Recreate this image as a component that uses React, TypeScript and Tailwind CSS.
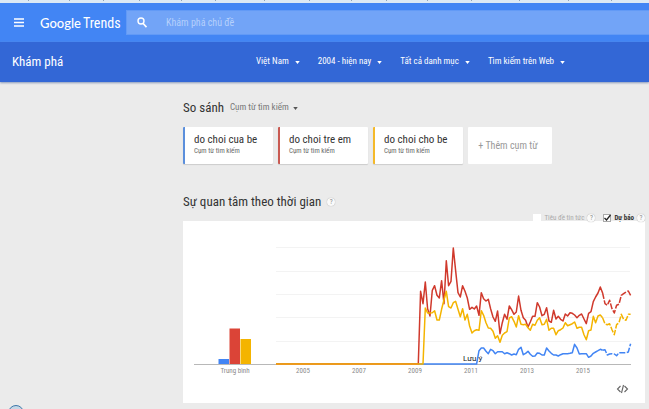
const BLUE = "#4285f4";
const RED = "#db4437";
const YELLOW = "#f4b400";

// monthly interest, starting at the first month with data; the last 12 are the forecast
const cuaBe = [
  ...Array<number>(26).fill(0),
  40, 48, 48, 38, 31, 44, 40, 31, 37, 37, 37, 31, 34, 31, 27, 30, 28, 44,
  50, 28, 32, 38, 29, 23, 24, 33, 32, 27, 27, 48, 39, 32, 27, 27, 24, 28, 31, 31,
  31, 32, 34, 59, 48, 30, 31, 31, 31, 20, 24, 32, 36, 40, 44, 41,
  43, 27, 30, 31, 30, 25, 34, 34, 34, 34, 36, 61,
];
const treEm = [
  0, 218, 181, 246, 166, 144, 221, 235, 206, 198, 250, 181, 310, 235, 248, 348,
  281, 214, 201, 235, 218, 198, 164, 170, 165, 174, 146, 214, 196, 189, 194, 166,
  141, 128, 159, 91, 124, 149, 134, 174, 163, 149, 156, 204,
  161, 139, 131, 111, 126, 143, 143, 184, 171, 145, 149, 169, 129, 125, 161, 135,
  143, 134, 129, 150, 144, 154, 152, 147, 139, 146, 150, 135, 121, 152, 157, 187,
  201, 213, 231, 213,
  181, 176, 191, 166, 153, 176, 179, 206, 211, 216, 219, 206,
];
const choBe = [
  0, 0, 0, 168, 153, 153, 154, 160, 132, 132, 164, 193, 218, 172, 168, 184, 188,
  164, 142, 166, 132, 149, 114, 93, 100, 103, 101, 160, 146, 124, 108, 107, 98, 77,
  85, 65, 86, 93, 97, 138, 142, 128, 111, 145,
  119, 118, 119, 109, 101, 119, 116, 131, 139, 118, 119, 134, 101, 107, 107, 88,
  100, 103, 108, 124, 115, 118, 121, 126, 107, 110, 110, 88, 73, 100, 102, 143,
  124, 144, 147, 139,
  120, 118, 121, 103, 88, 118, 124, 149, 134, 131, 149, 149,
];

const series = [
  { color: BLUE, values: cuaBe },
  { color: "#d0392c", values: treEm },
  { color: YELLOW, values: choBe },
];

const FORECAST = 12;
const BASE = 143;

const toPoints = (values: number[], offset = 0) =>
  values
    .map((v, i) => {
      const x = 235.3 + ((i + offset) * 7) / 3;
      return `${x.toFixed(1)},${(BASE - v / 3).toFixed(1)}`;
    })
    .join(" ");

const filters = ["Việt Nam", "2004 - hiện nay", "Tất cả danh mục", "Tìm kiếm trên Web"];

const terms = [
  { name: "do choi cua be", border: "border-[#5b8fdc]" },
  { name: "do choi tre em", border: "border-[#c95a52]" },
  { name: "do choi cho be", border: "border-[#f4b92a]" },
];

const years = [
  { label: "2005", x: 120 },
  { label: "2007", x: 176 },
  { label: "2009", x: 232 },
  { label: "2011", x: 288 },
  { label: "2013", x: 344 },
  { label: "2015", x: 400 },
];

const ticks = [28, 69, 103, 139, 181, 215, 264, 309, 351, 386, 427, 471, 519, 568, 611];

function Caret({ className = "" }: { className?: string }) {
  return (
    <svg viewBox="0 0 6 4" className={`h-[3px] w-[5px] shrink-0 ${className}`} aria-hidden="true">
      <path d="M0 0h6L3 4z" fill="currentColor" />
    </svg>
  );
}

function Help() {
  return (
    <button
      type="button"
      aria-label="Trợ giúp"
      className="flex size-2 shrink-0 items-center justify-center rounded-full bg-[#fafafa] text-[7px] leading-none text-[#888] shadow-[0_0_1px_#999]"
    >
      ?
    </button>
  );
}

function Chart() {
  return (
    <svg viewBox="0 0 462 182" className="block w-full" role="img" aria-label="Sự quan tâm theo thời gian">
      {[26, 50, 73, 96, 120].map((y) => (
        <path key={y} d={`M93 ${y}.5H447`} stroke="#f3f3f3" />
      ))}
      <path d={`M11 ${BASE}.5H448`} stroke="#b8b8b8" />

      {/* averages */}
      <rect x="35.5" y="138" width="10.5" height="5" fill={BLUE} />
      <rect x="46.5" y="107.5" width="10.5" height="35.5" fill={RED} />
      <rect x="57.5" y="118" width="10.5" height="25" fill={YELLOW} />

      {series.map(({ color, values }) => {
        const split = values.length - FORECAST;
        return (
          <g key={color} fill="none" stroke={color} strokeWidth="1.5" strokeLinejoin="round">
            <polyline points={`93,${BASE} ${toPoints(values.slice(0, split))}`} />
            <polyline points={toPoints(values.slice(split - 1), split - 1)} strokeDasharray="6 1.5" />
          </g>
        );
      })}
      <path d={`M93 ${BASE}.2H235`} stroke="#ee9a1f" strokeWidth="1.6" />

      <g fontSize="7" fill="#8a8a8a" textAnchor="middle">
        <text x="52" y="152">Trung bình</text>
        {years.map(({ label, x }) => (
          <text key={label} x={x} y="152">{label}</text>
        ))}
      </g>
      <text x="280" y="140" fontSize="8" fill="#222" fontFamily="Roboto">Lưu ý</text>

      <path
        d="M437.5 165L434.5 168L437.5 171M441.5 165L444.5 168L441.5 171M440.5 164L438.5 172"
        fill="none"
        stroke="#666"
        strokeWidth="1.1"
      />
    </svg>
  );
}

export default function App() {
  return (
    <div className="min-h-screen overflow-hidden bg-[#ebebeb] font-['Roboto_Condensed','Roboto','Liberation_Sans',sans-serif] text-[#333]">
      <svg className="block h-[3px] w-full bg-[#dce9f5]" aria-hidden="true">
        {ticks.map((x) => (
          <rect key={x} x={x} width="1" height="1" fill="#8fa5b8" />
        ))}
      </svg>

      <header className="text-white">
        <div className="flex h-[39px] items-center bg-[#4285f4]">
          <button type="button" aria-label="Menu" className="ml-3.5">
            <svg viewBox="0 0 10 9" className="block h-[9px] w-2.5">
              <path d="M0 1h10M0 4.5h10M0 8h10" stroke="currentColor" strokeWidth="1.3" />
            </svg>
          </button>
          <a href="#" className="ml-4 flex w-[86px] items-baseline gap-0.5 leading-none whitespace-nowrap">
            <span className="font-['Lato',sans-serif] text-[13px] font-medium">Google</span>
            <span className="text-[14px]">Trends</span>
          </a>
          <div className="flex h-[25px] flex-1 items-center border border-r-0 border-[#629af6] bg-[#72a4f7] pl-2.5">
            <svg viewBox="0 0 10 11" className="h-[11px] w-2.5" fill="none" stroke="currentColor" aria-hidden="true">
              <circle cx="4" cy="4" r="3" strokeWidth="1.4" />
              <path d="M6 6.3l3.5 3.9" strokeWidth="1.7" />
            </svg>
            <input
              type="text"
              aria-label="Khám phá chủ đề"
              placeholder="Khám phá chủ đề"
              className="ml-[19px] min-w-0 flex-1 bg-transparent text-[10px] outline-none placeholder:text-[#b5d0fc]"
            />
          </div>
        </div>

        <div className="flex h-10 items-center bg-[#3367d6] pl-3 shadow-[0_1px_2px_#8899bb]">
          <h1 className="w-[244px] text-[13px]">Khám phá</h1>
          <nav className="flex gap-[18px]">
            {filters.map((label) => (
              <button key={label} type="button" className="flex items-center gap-1.5 text-[9px] whitespace-nowrap">
                {label}
                <Caret />
              </button>
            ))}
          </nav>
        </div>
      </header>

      <main className="mr-1 ml-[183px] pt-4">
        <div className="flex h-5 items-center gap-1.5">
          <h2 className="text-[13px]">So sánh</h2>
          <button type="button" className="flex items-center gap-1 text-[9px] text-[#777]">
            Cụm từ tìm kiếm
            <Caret className="text-[#555]" />
          </button>
        </div>

        <div className="mt-[9px] flex gap-[5px]">
          {terms.map(({ name, border }) => (
            <div
              key={name}
              className={`h-[37px] w-[90px] rounded-[1px] border-l-2 bg-white pt-[7px] pl-[9px] whitespace-nowrap shadow-[0_1px_1px_#ccc] ${border}`}
            >
              <div className="text-[11px] leading-3">{name}</div>
              <div className="text-[7px] leading-[10px] text-[#666]">Cụm từ tìm kiếm</div>
            </div>
          ))}
          <button type="button" className="h-[37px] w-[84px] rounded-[1px] bg-white pr-1 text-[10px] text-[#999]">
            + Thêm cụm từ
          </button>
        </div>

        <section className="pt-7">
          <div className="flex h-[30px] justify-between">
            <div className="flex h-5 items-center gap-1.5">
              <h2 className="text-[13px]">Sự quan tâm theo thời gian</h2>
              <Help />
            </div>
            <div className="relative z-10 flex items-center gap-2 self-end text-[7px] leading-2">
              <div className="flex items-center gap-[3px] text-[#aaa]">
                <label className="flex items-center gap-[3px]">
                  <input type="checkbox" disabled className="size-2 appearance-none bg-white" />
                  Tiêu đề tin tức
                </label>
                <Help />
              </div>
              <div className="flex items-center gap-[3px]">
                <label className="flex items-center gap-[3px] font-bold text-[#333]">
                  <span className="relative flex size-2">
                    <input
                      type="checkbox"
                      defaultChecked
                      className="peer size-2 appearance-none border border-[#aaa] bg-white"
                    />
                    <svg
                      viewBox="0 0 8 8"
                      className="pointer-events-none absolute inset-0 hidden overflow-visible peer-checked:block"
                      fill="none"
                      stroke="#222"
                      strokeWidth="1.3"
                      aria-hidden="true"
                    >
                      <path d="M1.5 4L3.5 6L7.5 1" />
                    </svg>
                  </span>
                  Dự báo
                </label>
                <Help />
              </div>
            </div>
          </div>
          <div className="-mt-px bg-white">
            <Chart />
          </div>
        </section>
      </main>

      <div className="fixed -bottom-3 left-2 size-4 rounded-full border border-[#3d77a8] bg-[#c4d7e6]" />
    </div>
  );
}
